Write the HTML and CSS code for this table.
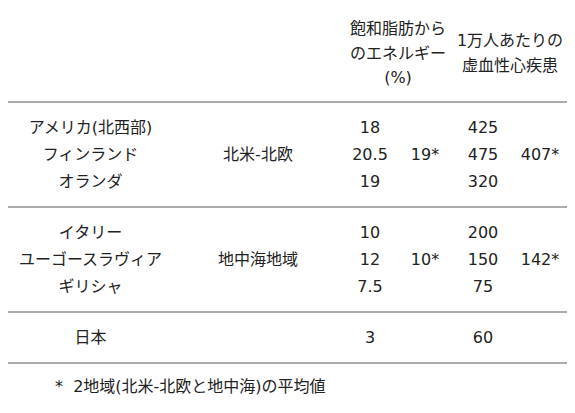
FILE: index.html
```html
<!DOCTYPE html>
<html lang="ja">
<head>
<meta charset="utf-8">
<link rel="stylesheet" href="styles.css">
</head>
<body>
<table class="data">
  <colgroup>
    <col class="c-country">
    <col class="c-region">
    <col class="c-val">
    <col class="c-avg">
    <col class="c-val2">
    <col class="c-avg2">
  </colgroup>
  <thead>
    <tr>
      <th colspan="2"></th>
      <th colspan="2">飽和脂肪から<br>のエネルギー<br>(%)</th>
      <th colspan="2">1万人あたりの<br>虚血性心疾患</th>
    </tr>
  </thead>
  <tbody>
    <tr class="first">
      <td>アメリカ(北西部)</td>
      <td rowspan="3" class="last">北米-北欧</td>
      <td>18</td>
      <td rowspan="3" class="last">19*</td>
      <td>425</td>
      <td rowspan="3" class="last">407*</td>
    </tr>
    <tr>
      <td>フィンランド</td>
      <td>20.5</td>
      <td>475</td>
    </tr>
    <tr class="end">
      <td>オランダ</td>
      <td>19</td>
      <td>320</td>
    </tr>
  </tbody>
  <tbody>
    <tr class="first">
      <td>イタリー</td>
      <td rowspan="3" class="last">地中海地域</td>
      <td>10</td>
      <td rowspan="3" class="last">10*</td>
      <td>200</td>
      <td rowspan="3" class="last">142*</td>
    </tr>
    <tr>
      <td>ユーゴースラヴィア</td>
      <td>12</td>
      <td>150</td>
    </tr>
    <tr class="end">
      <td>ギリシャ</td>
      <td>7.5</td>
      <td>75</td>
    </tr>
  </tbody>
  <tbody>
    <tr class="first end">
      <td>日本</td>
      <td></td>
      <td>3</td>
      <td></td>
      <td>60</td>
      <td></td>
    </tr>
  </tbody>
</table>
<p class="note">* &nbsp;2地域(北米-北欧と地中海)の平均値</p>
</body>
</html>
```

FILE: styles.css
```css
html, body {
  background: #ffffff;
}
body {
  margin: 8px;
  font-family: "DejaVu Sans", "Noto Sans CJK JP", sans-serif;
  font-size: 16px;
  color: #222222;
}
.data {
  width: 559px;
  table-layout: fixed;
  border-collapse: collapse;
  border-bottom: 2px solid #ababab;
}
.c-country { width: 165px; }
.c-region { width: 170px; }
.c-val { width: 54px; }
.c-avg { width: 56px; }
.c-val2 { width: 60px; }
.c-avg2 { width: 54px; }

.data th {
  font-weight: normal;
  line-height: 24.5px;
  padding: 9px 0 10px 0;
  text-align: center;
  vertical-align: middle;
}
.data tbody {
  border-top: 2px solid #ababab;
}
.data td {
  padding: 0;
  line-height: 27px;
  text-align: center;
  vertical-align: middle;
  white-space: nowrap;
}
.data tr.first td {
  padding-top: 11px;
}
.data tr.end td,
.data td.last {
  padding-bottom: 11px;
}
.data tr.first td.last {
  padding-top: 11px;
}
.note {
  margin: 11px 0 0 47px;
  line-height: 24px;
  white-space: nowrap;
}
```
